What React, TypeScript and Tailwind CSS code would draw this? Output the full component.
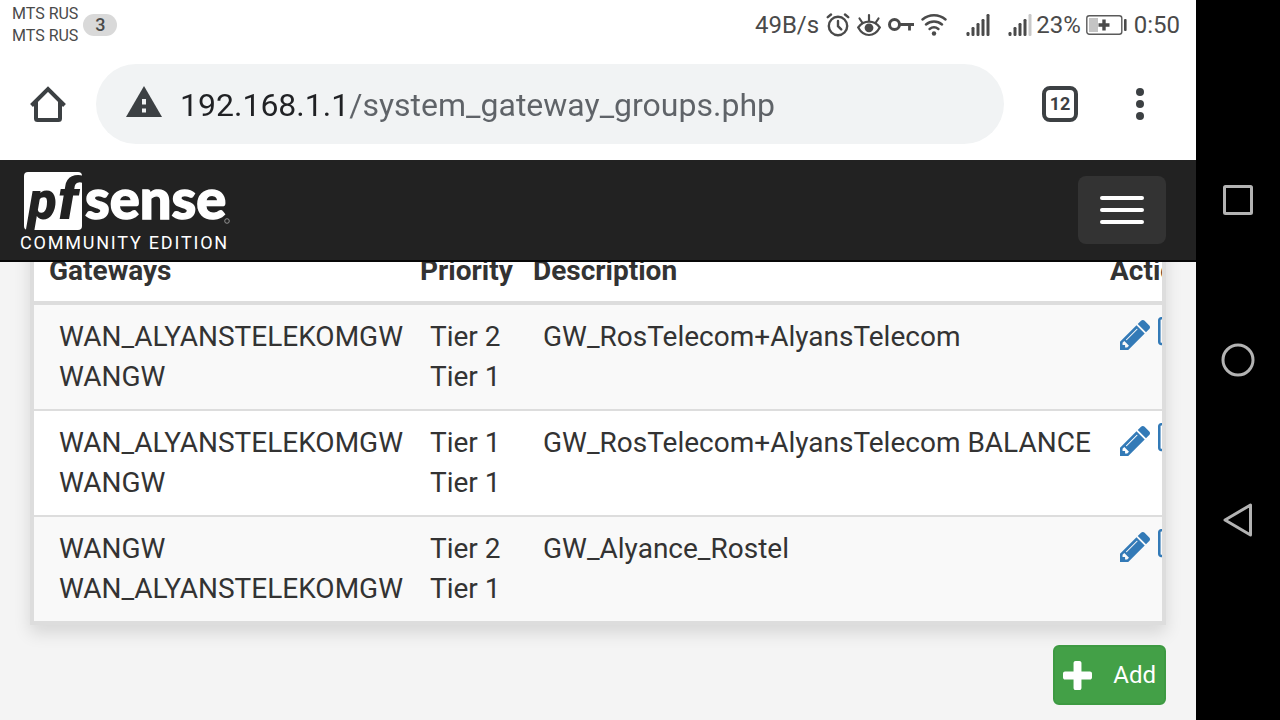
const groups = [
  {
    gateways: ["WAN_ALYANSTELEKOMGW", "WANGW"],
    tiers: ["Tier 2", "Tier 1"],
    description: "GW_RosTelecom+AlyansTelecom",
  },
  {
    gateways: ["WAN_ALYANSTELEKOMGW", "WANGW"],
    tiers: ["Tier 1", "Tier 1"],
    description: "GW_RosTelecom+AlyansTelecom BALANCE",
  },
  {
    gateways: ["WANGW", "WAN_ALYANSTELEKOMGW"],
    tiers: ["Tier 2", "Tier 1"],
    description: "GW_Alyance_Rostel",
  },
];

function SignalIcon({ weak = false }: { weak?: boolean }) {
  return (
    <svg width="24" height="24" viewBox="0 0 24 24" fill="#4a4a4a">
      <rect x="0.5" y="19" width="3" height="4" rx="1.2" />
      <rect x="5.5" y="14" width="3" height="9" rx="1.2" />
      <rect x="10.5" y="10" width="3" height="13" rx="1.2" />
      <rect x="15.5" y="6" width="3" height="17" rx="1.2" />
      <rect x="20.5" y="1" width="3" height="22" rx="1.2" fill={weak ? "#c9c9c9" : "#4a4a4a"} />
    </svg>
  );
}

function StatusBar() {
  return (
    <div className="flex h-12 items-center justify-between pl-3 pr-4 pt-[2px] text-[#4a4a4a]">
      <div className="flex items-center gap-[5px]">
        <div className="text-base leading-[22px]">
          <p>MTS RUS</p>
          <p>MTS RUS</p>
        </div>
        <span className="flex h-[22px] w-[34px] items-center justify-center rounded-full bg-[#d9d9d9] text-lg font-medium">
          3
        </span>
      </div>
      <div className="flex items-center gap-[7px] text-2xl leading-8">
        <span>49B/s</span>
        {/* alarm */}
        <svg width="24" height="24" viewBox="0 0 24 24" fill="none" stroke="#4a4a4a" strokeWidth="2.4" strokeLinecap="round">
          <circle cx="12" cy="13" r="9.2" />
          <path d="M12 8v5.200l3.200 3.200M1.800 4.200 5 1.500M22.200 4.200 19 1.500" />
        </svg>
        {/* eye comfort */}
        <svg width="24" height="24" viewBox="0 0 24 24" fill="none" stroke="#4a4a4a" strokeWidth="2.2" strokeLinecap="round">
          <path d="M1.200 14.500C4 10.600 7.700 8.600 12 8.600s8 2 10.800 5.900C20 19.600 16.300 22 12 22S4 19.600 1.200 14.500Z" />
          <circle cx="12" cy="14.800" r="4.400" fill="#4a4a4a" stroke="none" />
          <path d="M12 2v6M2.500 5.500l2.700 4M21.500 5.500l-2.700 4" />
        </svg>
        {/* vpn key */}
        <svg width="26" height="24" viewBox="0 0 26 24" fill="none" stroke="#4a4a4a" strokeWidth="3">
          <circle cx="6.500" cy="11.500" r="5" />
          <path d="M11.500 11.500H26M21.500 11.500v6" strokeWidth="2.800" />
        </svg>
        {/* wifi */}
        <svg width="26" height="24" viewBox="0 0 26 24" fill="none" stroke="#4a4a4a" strokeWidth="2.400" strokeLinecap="round">
          <path d="M1.500 6.500C8 .8 18 .8 24.500 6.500M5 11.500c4.700-4 11.300-4 16 0M8.600 16c2.700-2.200 6.100-2.200 8.800 0" />
          <circle cx="13" cy="20.500" r="2.200" fill="#4a4a4a" stroke="none" />
        </svg>
        <div className="flex items-center gap-[18px] pl-3">
          <SignalIcon />
          <div className="flex items-center gap-1">
            <SignalIcon weak />
            <span>23%</span>
            {/* battery */}
            <svg className="ml-[1px]" width="41" height="24" viewBox="0 0 41 24" fill="none">
              <rect x="0.800" y="2.800" width="35" height="18.400" rx="2.500" stroke="#5a5a5a" strokeWidth="1.400" />
              <rect x="3" y="5" width="9" height="14" fill="#c4c4c4" />
              <path d="M18 6.500v11M12.500 12h11" stroke="#4a4a4a" strokeWidth="3.400" />
              <rect x="38" y="6" width="2.600" height="12" rx="1" fill="#4a4a4a" />
            </svg>
          </div>
        </div>
        <span>0:50</span>
      </div>
    </div>
  );
}

function BrowserBar() {
  return (
    <div className="flex h-28 items-center pl-[30px] pr-9">
      <button aria-label="Home">
        <svg width="36" height="36" viewBox="0 0 36 36" fill="none" stroke="#3c4043" strokeWidth="4">
          <path d="M1.500 19.500 18 3l16.500 16.500" />
          <path d="M6 16v16.500Q6 34 7.500 34h21q1.500 0 1.500-1.500V16" />
        </svg>
      </button>
      <div className="ml-[30px] flex h-20 flex-1 items-center gap-[18px] rounded-full bg-[#f1f3f4] px-[30px]">
        <svg className="shrink-0" width="36" height="36" viewBox="0 0 36 36">
          <path d="M18 0 36 31H0Z" fill="#3c4043" />
          <path d="M16 13h4v5.500h-4zM16 22.500h4v4h-4z" fill="#f1f3f4" />
        </svg>
        <input
          aria-label="Address"
          defaultValue="192.168.1.1/system_gateway_groups.php"
          className="w-full bg-linear-to-r from-[#202124] from-[169px] to-[#5f6368] to-[169px] bg-clip-text pt-[2px] text-[32px] leading-10 text-transparent outline-none"
        />
      </div>
      <button
        aria-label="Tabs"
        className="ml-[38px] flex size-9 items-center justify-center rounded-lg border-4 border-[#3c4043] text-lg leading-5 font-bold text-[#3c4043]"
      >
        12
      </button>
      <button aria-label="Menu" className="ml-[42px] flex w-10 flex-col items-center gap-1">
        <span className="size-2 rounded-full bg-[#3c4043]" />
        <span className="size-2 rounded-full bg-[#3c4043]" />
        <span className="size-2 rounded-full bg-[#3c4043]" />
      </button>
    </div>
  );
}

function Logo() {
  return (
    <a href="#" className="block text-white">
      <svg className="overflow-visible" width="212" height="62" viewBox="0 0 212 62">
        <rect x="4" y="2" width="58" height="58" rx="4" fill="#fff" />
        <g fontFamily="Roboto, sans-serif" fontWeight="900" fontStyle="italic" fill="#222">
          <text x="8" y="49" fontSize="53">
            p
          </text>
          <text x="38" y="49" fontSize="58">
            f
          </text>
        </g>
        <text
          x="65"
          y="49"
          fontFamily="Lato, sans-serif"
          fontWeight="900"
          fontSize="56"
          fill="#fff"
          stroke="#fff"
          strokeWidth="1.400"
        >
          sense
        </text>
        <circle cx="207" cy="51" r="2.300" fill="none" stroke="#aaa" strokeWidth="0.800" />
      </svg>
      <span className="block text-lg leading-[22px] tracking-widest">COMMUNITY EDITION</span>
    </a>
  );
}

function Navbar() {
  return (
    <header className="relative z-10 flex h-[102px] justify-between border-b-2 border-[#080808] bg-[#222222] pl-5 pr-[30px] pt-[10px]">
      <Logo />
      <button
        aria-label="Toggle navigation"
        className="mt-[6px] flex h-[68px] w-[88px] flex-col items-center justify-center gap-2 rounded-lg bg-[#333333]"
      >
        <span className="h-1 w-11 rounded-xs bg-white" />
        <span className="h-1 w-11 rounded-xs bg-white" />
        <span className="h-1 w-11 rounded-xs bg-white" />
      </button>
    </header>
  );
}

function RowActions() {
  return (
    <div className="flex gap-2 text-[#337ab7]">
      <a href="#" aria-label="Edit" className="pt-[3px]">
        <svg width="30" height="30" viewBox="128 149 1515 1515" fill="currentColor">
          <path d="M491 1536l91-91-235-235-91 91v107h128v128h107zm523-928q0-22-22-22-10 0-17 7l-542 542q-7 7-7 17 0 22 22 22 10 0 17-7l542-542q7-7 7-17zm-54-192l416 416-832 832h-416v-416zm683 96q0 53-37 90l-166 166-416-416 166-165q36-38 90-38 53 0 91 38l235 234q37 39 37 91z" />
        </svg>
      </a>
      <a href="#" aria-label="Copy">
        <svg width="36" height="36" viewBox="0 0 1792 1792" fill="currentColor">
          <path d="M1664 1632v-1088q0-13-9.500-22.500t-22.500-9.500h-1088q-13 0-22.500 9.500t-9.500 22.500v1088q0 13 9.500 22.500t22.500 9.500h1088q13 0 22.500-9.500t9.500-22.500zm128-1088v1088q0 66-47 113t-113 47h-1088q-66 0-113-47t-47-113v-1088q0-66 47-113t113-47h1088q66 0 113 47t47 113zm-384-384v160h-128v-160q0-13-9.500-22.500t-22.500-9.500h-1088q-13 0-22.500 9.500t-9.500 22.500v1088q0 13 9.500 22.500t22.500 9.500h160v128h-160q-66 0-113-47t-47-113v-1088q0-66 47-113t113-47h1088q66 0 113 47t47 113z" />
        </svg>
      </a>
    </div>
  );
}

function GatewayTable() {
  return (
    <div className="-mt-[21px] overflow-hidden border-4 border-t-0 border-[#dddddd] shadow-[0_8px_16px_rgba(0,0,0,0.12)]">
      <table className="w-[1220px] table-fixed border-collapse bg-white text-left text-[28px] leading-10 whitespace-nowrap text-[#333333]">
        <colgroup>
          <col className="w-[376px]" />
          <col className="w-[113px]" />
          <col className="w-[577px]" />
          <col />
        </colgroup>
        <thead>
          <tr className="border-b-4 border-[#dddddd]">
            <th className="py-[10px] pl-[15px]">Gateways</th>
            <th className="py-[10px] pl-[10px]">Priority</th>
            <th className="py-[10px] pl-[10px]">Description</th>
            <th className="py-[10px] pl-[10px]">Actions</th>
          </tr>
        </thead>
        <tbody>
          {groups.map((group, index) => (
            <tr
              key={index}
              className="border-b-2 border-[#dddddd] align-top last:border-b-0 odd:bg-[#f9f9f9]"
            >
              <td className="py-3 pl-[25px]">
                {group.gateways.map((name) => (
                  <p key={name}>{name}</p>
                ))}
              </td>
              <td className="py-3 pl-5">
                {group.tiers.map((tier, i) => (
                  <p key={i}>{tier}</p>
                ))}
              </td>
              <td className="py-3 pl-5">{group.description}</td>
              <td className="py-3 pl-5">
                <RowActions />
              </td>
            </tr>
          ))}
        </tbody>
      </table>
    </div>
  );
}

function SystemNav() {
  return (
    <nav className="flex w-[84px] shrink-0 flex-col bg-black py-[120px]">
      <button aria-label="Recent apps" className="flex flex-1 items-center justify-center">
        <svg width="34" height="36" viewBox="0 0 34 36" fill="none" stroke="#b3b3b3" strokeWidth="3">
          <rect x="3.500" y="4.500" width="27" height="27" rx="1" />
        </svg>
      </button>
      <button aria-label="Home screen" className="flex flex-1 items-center justify-center">
        <svg width="34" height="36" viewBox="0 0 34 36" fill="none" stroke="#b3b3b3" strokeWidth="3">
          <circle cx="17" cy="18" r="15" />
        </svg>
      </button>
      <button aria-label="Back" className="flex flex-1 items-center justify-center">
        <svg width="34" height="36" viewBox="0 0 34 36" fill="none" stroke="#b3b3b3" strokeWidth="3" strokeLinejoin="round">
          <path d="M4 18 29.500 3v30Z" />
        </svg>
      </button>
    </nav>
  );
}

export default function App() {
  return (
    <div className="flex h-screen overflow-hidden bg-white font-['Roboto',sans-serif]">
      <div className="flex min-w-0 flex-1 flex-col">
        <StatusBar />
        <BrowserBar />
        <Navbar />
        <main className="flex-1 bg-[#f4f4f4] px-[30px]">
          <GatewayTable />
          <div className="mt-5 flex justify-end">
            <button className="flex h-[60px] items-center gap-[21px] rounded-md border-2 border-[#3d9a42] bg-[#43a047] px-2 text-2xl text-white">
              <svg width="29" height="29" viewBox="192 128 1408 1408" fill="currentColor">
                <path d="M1600 736v192q0 40-28 68t-68 28h-416v416q0 40-28 68t-68 28h-192q-40 0-68-28t-28-68v-416h-416q-40 0-68-28t-28-68v-192q0-40 28-68t68-28h416v-416q0-40 28-68t68-28h192q40 0 68 28t28 68v416h416q40 0 68 28t28 68z" />
              </svg>
              Add
            </button>
          </div>
        </main>
      </div>
      <SystemNav />
    </div>
  );
}
